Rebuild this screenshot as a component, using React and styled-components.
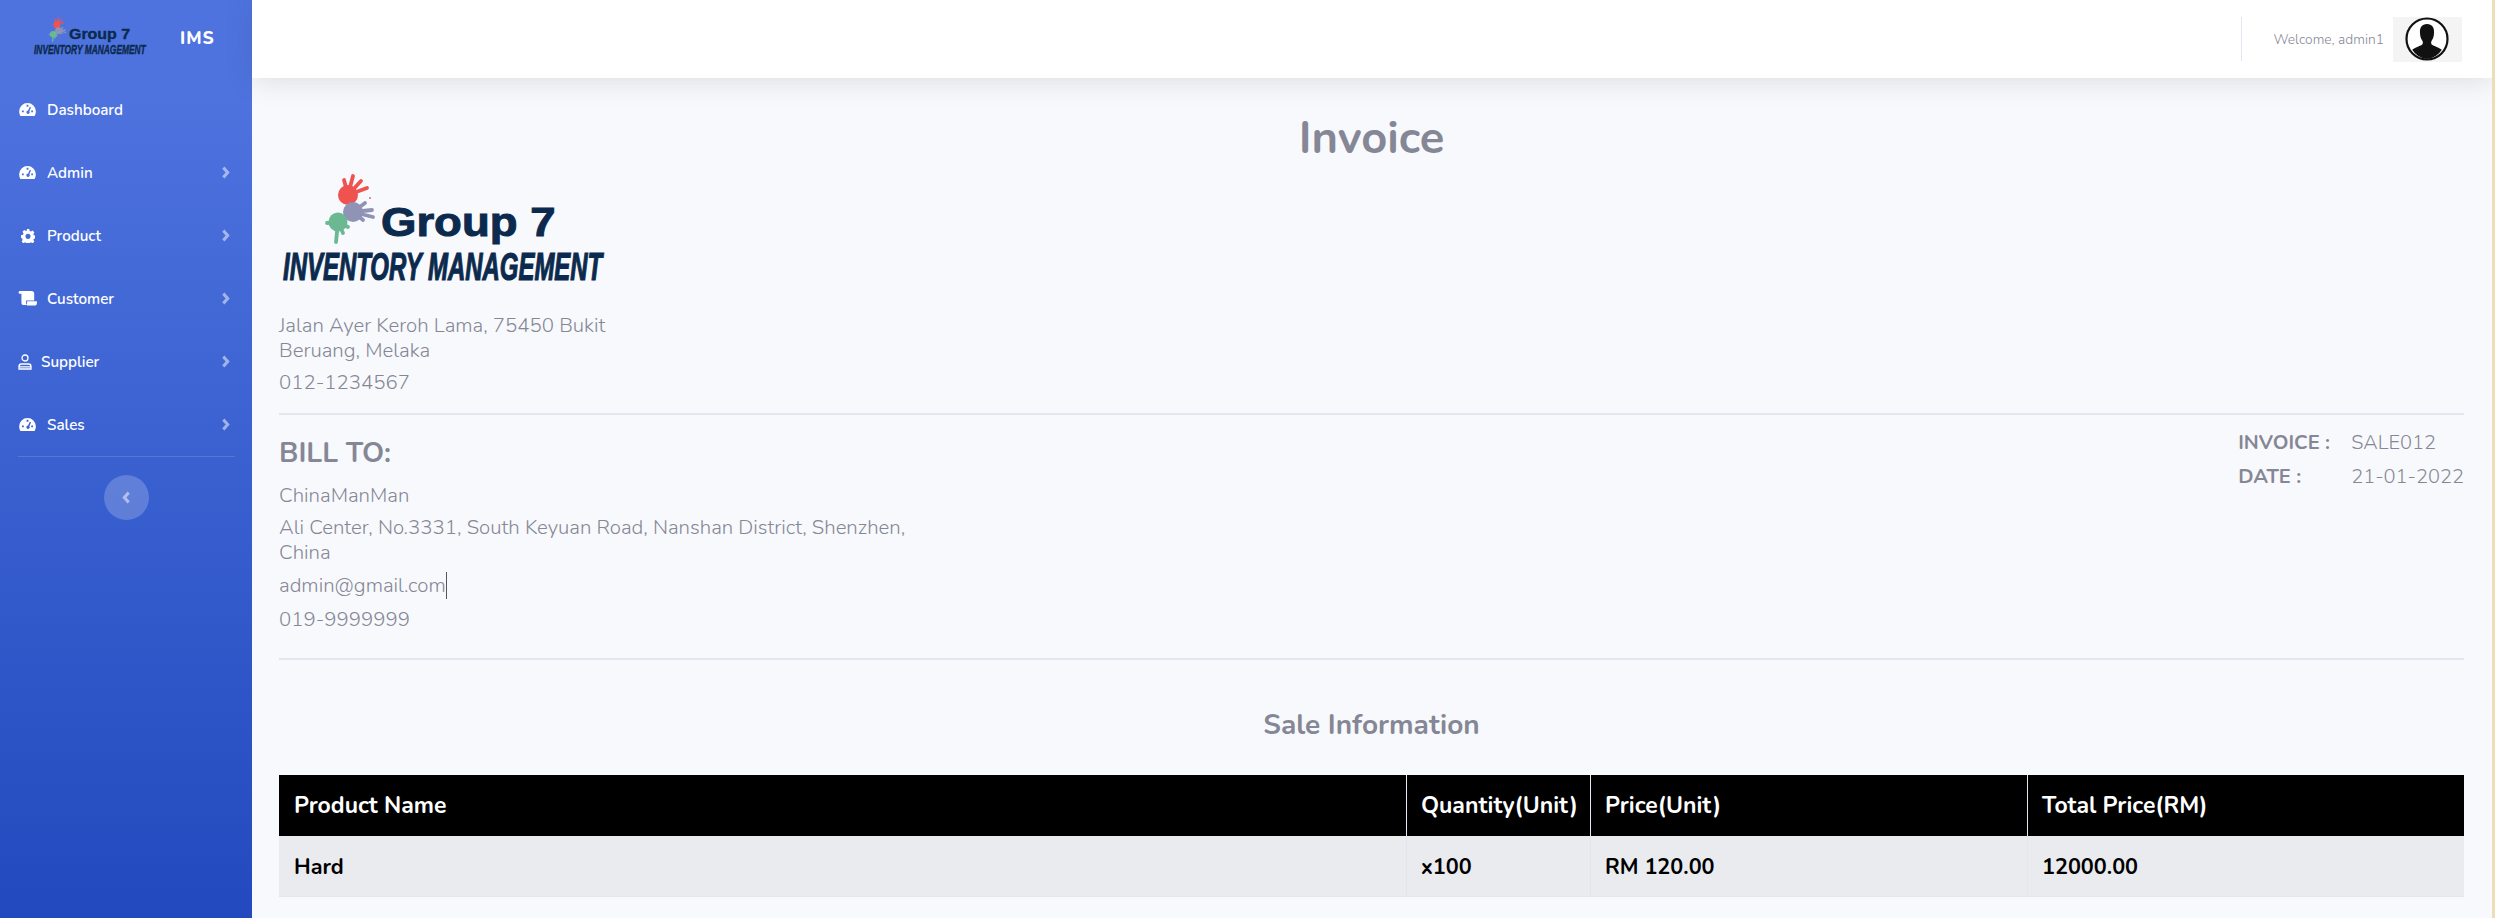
import React from "react";
import styled, { createGlobalStyle } from "styled-components";

const F = `"Nunito", "Lato", "Open Sans", sans-serif`;
const Global = createGlobalStyle`
  html, body { margin: 0; padding: 0; height: 100%; background: #f8f9fc; overflow: hidden; }
  body { font-family: ${F}; color: #858796; }
  * { box-sizing: border-box; }
`;
const Page = styled.div`display: flex; width: 2495px; height: 918px; overflow: hidden; border-right: 3px solid #ecdfb8;`;
const Sidebar = styled.aside`
  width: 252px; flex: none; height: 918px;
  background: linear-gradient(180deg, #4e73df 10%, #224abe 100%);
  display: flex; flex-direction: column;
`;
const Brand = styled.div`height: 78px; display: flex; align-items: center; padding: 0 0 2px 34px; gap: 34px;`;
const BrandName = styled.span`color: #fff; font-weight: 800; font-size: 17.500px; letter-spacing: 1px;`;
const LogoBox = styled.div`position: relative; width: ${p => 320 * p.$k}px; height: ${p => 118 * p.$k}px; flex: none;`;
const HandsSvg = styled.svg`position: absolute; left: ${p => 38 * p.$k}px; top: ${p => -5 * p.$k}px;`;
const LogoTop = styled.span`
  position: absolute; white-space: nowrap; font-family: "Liberation Sans", sans-serif; font-weight: 700;
  color: #0b2a4d; left: ${p => 99 * p.$k}px; top: ${p => 27 * p.$k}px; font-size: ${p => 41 * p.$k}px; line-height: 1;
  transform: scaleX(1.11); transform-origin: left top; -webkit-text-stroke: ${p => 1 * p.$k}px #0b2a4d;
`;
const LogoBottom = styled.span`
  position: absolute; white-space: nowrap; font-family: "Liberation Sans", sans-serif; font-weight: 700; font-style: italic;
  color: #0b2a4d; left: ${p => 1 * p.$k}px; top: ${p => 73 * p.$k}px; font-size: ${p => 38 * p.$k}px; line-height: 1;
  transform: scaleX(.63); transform-origin: left top; -webkit-text-stroke: ${p => 1.2 * p.$k}px #0b2a4d;
`;
const NavItem = styled.div`
  height: 63px; display: flex; align-items: center; padding: 0 22px 0 18px; color: #fff; font-size: 15.200px; font-weight: 600;
`;
const NavIcon = styled.span`width: ${p => p.$w || 29}px; padding-left: ${p => p.$i || 0}px; flex: none; display: flex; align-items: center;`;
const NavLabel = styled.span`flex: 1;`;
const Divider = styled.hr`margin: 0 17px 0 18px; border: 0; border-top: 1px solid rgba(255,255,255,.15);`;
const Toggle = styled.div`
  width: 45px; height: 45px; border-radius: 50%; background: rgba(255,255,255,.2); margin: 18px auto 0;
  display: flex; align-items: center; justify-content: center;
`;
const Main = styled.main`flex: 1; min-width: 0; display: flex; flex-direction: column;`;
const Topbar = styled.header`
  height: 78px; flex: none; background: #fff; box-shadow: 0 .15rem 1.75rem 0 rgba(58,59,69,.15);
  display: flex; align-items: center; justify-content: flex-end; padding-right: 30px; position: relative;
`;
const VRule = styled.div`width: 1px; height: 44px; background: #e3e6f0; margin-right: 31px;`;
const Welcome = styled.span`font-size: 13.800px; font-weight: 300; color: #858796; margin-right: 9px;`;
const Avatar = styled.div`width: 69px; height: 45px; background: #f4f4f4; display: flex; align-items: center; justify-content: center; padding-right: 1px;`;
const Content = styled.div`flex: 1; padding: 33px 28px 0 27px; min-height: 0;`;
const Title = styled.h1`margin: 0; text-align: center; font-size: 45.300px; font-weight: 700; line-height: 54px; color: #858796;`;
const LogoRow = styled.div`margin: 10px 0 0 3px; height: 138px;`;
const P = styled.p`
  margin: 0 0 8px; font-size: 20.400px; line-height: 24.500px; font-weight: 300; color: #858796; width: ${p => p.$w || "auto"};
`;
const Rule = styled.hr`margin: ${p => p.$m || "0"}; border: 0; border-top: 2px solid #e3e6f0;`;
const BillRow = styled.div`display: flex; justify-content: space-between; align-items: flex-start;`;
const BillTo = styled.h3`margin: 21px 0 13px; font-size: 28.200px; line-height: 34px; font-weight: 700; color: #858796;`;
const Meta = styled.div`display: grid; grid-template-columns: 113px auto; margin-top: 16px; row-gap: 10px;`;
const MetaKey = styled.span`font-size: 20px; line-height: 24px; font-weight: 700; color: #858796;`;
const MetaVal = styled.span`font-size: 20px; line-height: 24px; font-weight: 300; color: #858796;`;
const Caret = styled.span`display: inline-block; width: 1px; height: 27px; background: #555; vertical-align: -7px;`;
const Section = styled.h4`margin: 48px 0 32px; text-align: center; font-size: 28px; line-height: 35px; font-weight: 700; color: #858796;`;
const Table = styled.div`display: grid; grid-template-columns: 1127px 184px 437px 1fr;`;
const Head = styled.div`
  height: 61px; background: #000; color: #fff; font-size: 23px; font-weight: 700; display: flex; align-items: center;
  border-left: ${p => p.$first ? "0" : "1px solid #e3e6f0"}; white-space: nowrap; padding-left: ${p => p.$first ? 15 : 14}px;
`;
const Cell = styled.div`
  height: 61px; background: #eaebef; color: #000; font-size: 21.600px; font-weight: 700; display: flex; align-items: center;
  border-left: ${p => p.$first ? "0" : "1px solid #e3e6f0"}; border-bottom: 1px solid #e3e6f0; padding: 2px 0 0 ${p => p.$first ? 15 : 14}px;
`;

const Finger = styled.path`fill: none; stroke: ${p => p.$c}; stroke-width: 3.800; stroke-linecap: round;`;
const Hand = ({ c, x, y, r, tips }) => (
  <>
    <circle cx={x} cy={y} r={r} fill={c} />
    {tips.map(([a, b], i) => <Finger key={i} $c={c} d={`M${x} ${y}L${a} ${b}`} />)}
  </>
);
const Hands = ({ k }) => (
  <HandsSvg $k={k} viewBox="0 0 60 80" width={60 * k} height={80 * k}>
    <Hand c="#ef5350" x={28} y={25} r={10} tips={[[24, 10], [33, 6], [41, 11], [47, 18]]} />
    <Hand c="#8f93b5" x={33} y={42} r={10} tips={[[45, 33], [52, 40], [53, 47], [43, 50]]} />
    <Hand c="#6cb893" x={18} y={52} r={9.500} tips={[[7, 53], [16, 72], [23, 63], [28, 57]]} />
    <circle cx="50" cy="28" r=".8" fill="#b11" />
  </HandsSvg>
);
const Logo = ({ k = 1 }) => (
  <LogoBox $k={k}>
    <Hands k={k} />
    <LogoTop $k={k}>Group 7</LogoTop>
    <LogoBottom $k={k}>INVENTORY MANAGEMENT</LogoBottom>
  </LogoBox>
);
const Gauge = () => (
  <svg viewBox="0 0 18 14" width="17" height="13"><path fillRule="evenodd" fill="#fff" d="M9 0a9 9 0 0 1 9 9c0 2-.5 3.600-1.400 5H1.400A9 9 0 0 1 0 9a9 9 0 0 1 9-9zM8 2v2h2V2zM3 8v2h2V8zm10 0v2h2V8zm-1.500-4L9.600 8.100a1.800 1.800 0 1 0 1.500.8L12.800 4.500z" /></svg>
);
const Gear = () => (
  <svg viewBox="0 0 16 16" width="14" height="14"><path fillRule="evenodd" fill="#fff" d="M6.500 0h3l.4 2.200 1.500.7 1.900-1.200 2 2.200-1.200 1.800.6 1.500 2.300.5v2.800l-2.300.5-.6 1.500 1.200 1.800-2 2.100-1.900-1.200-1.500.7-.4 2.200h-3l-.4-2.200-1.500-.7-1.900 1.200-2-2.100 1.200-1.800-.6-1.500L0 9.800V7l2.300-.5.6-1.500-1.200-1.800 2-2.200 1.900 1.200 1.500-.7zM8 5.500a2.900 2.900 0 1 0 0 5.800 2.900 2.900 0 0 0 0-5.800z" /></svg>
);
const Scroll = () => (
  <svg viewBox="0 0 20 16" width="20" height="15"><path fill="#fff" d="M0 1.500C0 .6.700 0 1.500 0H14c1.600 0 2.600 1 2.600 2.500V10H8v3c0 .8.500 1.300 1 2H5.500C4 15 3 14 3 12.500V3H1.500C.6 3 0 2.400 0 1.500zM9 11h10.500v2c0 1.500-1 2.500-2.500 2.500H8.500c.5-.7.500-1.500.5-2.500z" /></svg>
);
const User = () => (
  <svg viewBox="0 0 14 16" width="14" height="16" fill="none" stroke="#fff" strokeWidth="1.300"><circle cx="7" cy="4" r="3" /><path d="M1 15v-2.500C1 11 2 10 3.500 10h7c1.500 0 2.500 1 2.500 2.500V15zM1 12.800h12" /></svg>
);
const Chevron = ({ left, c = "rgba(255,255,255,.5)" }) => (
  <svg viewBox="0 0 8 12" width="9" height="13" fill="none" stroke={c} strokeWidth="2.800" strokeLinejoin="miter"><path d={left ? "M6 1.500 2 6l4 4.500" : "M2 1.500 6 6l-4 4.500"} /></svg>
);
const AvatarIcon = () => (
  <svg viewBox="0 0 44 44" width="44" height="44">
    <circle cx="22" cy="22" r="20.500" fill="#fff" stroke="#111" strokeWidth="2.200" />
    <path fill="#111" d="M22 7c5 0 7.500 3.500 7 9 0 3-1 6-2.500 8-.6 1.200-.5 3 .5 3.800 2 1.500 7 2.500 9.800 5A20 20 0 0 1 22 42a20 20 0 0 1-14.800-9.200c2.800-2.500 7.800-3.500 9.800-5 1-.8 1.100-2.600.5-3.800-1.500-2-2.500-5-2.500-8-.5-5.500 2-9 7-9z" />
  </svg>
);

const nav = [
  ["Dashboard", <Gauge />, false, 29, 1],
  ["Admin", <Gauge />, true, 29, 1],
  ["Product", <Gear />, true, 29, 3],
  ["Customer", <Scroll />, true, 29, 0],
  ["Supplier", <User />, true, 23, 0],
  ["Sales", <Gauge />, true, 29, 1],
];

export default function App() {
  return (
    <Page>
      <Global />
      <Sidebar>
        <Brand>
          <Logo k={0.35} />
          <BrandName>IMS</BrandName>
        </Brand>
        {nav.map(([label, icon, more, w, i]) => (
          <NavItem key={label}>
            <NavIcon $w={w} $i={i}>{icon}</NavIcon>
            <NavLabel>{label}</NavLabel>
            {more && <Chevron />}
          </NavItem>
        ))}
        <Divider />
        <Toggle><Chevron left /></Toggle>
      </Sidebar>
      <Main>
        <Topbar>
          <VRule />
          <Welcome>Welcome, admin1</Welcome>
          <Avatar><AvatarIcon /></Avatar>
        </Topbar>
        <Content>
          <Title>Invoice</Title>
          <LogoRow><Logo /></LogoRow>
          <P $w="345px">Jalan Ayer Keroh Lama, 75450 Bukit Beruang, Melaka</P>
          <P>012-1234567</P>
          <Rule $m="18px 0 0" />
          <BillRow>
            <div>
              <BillTo>BILL TO:</BillTo>
              <P>ChinaManMan</P>
              <P $w="640px">Ali Center, No.3331, South Keyuan Road, Nanshan District, Shenzhen, China</P>
              <P>admin@gmail.com<Caret /></P>
              <P>019-9999999</P>
            </div>
            <Meta>
              <MetaKey>INVOICE :</MetaKey><MetaVal>SALE012</MetaVal>
              <MetaKey>DATE :</MetaKey><MetaVal>21-01-2022</MetaVal>
            </Meta>
          </BillRow>
          <Rule $m="18px 0 0" />
          <Section>Sale Information</Section>
          <Table>
            <Head $first>Product Name</Head>
            <Head>Quantity(Unit)</Head>
            <Head>Price(Unit)</Head>
            <Head>Total Price(RM)</Head>
            <Cell $first>Hard</Cell>
            <Cell>x100</Cell>
            <Cell>RM 120.00</Cell>
            <Cell>12000.00</Cell>
          </Table>
        </Content>
      </Main>
    </Page>
  );
}
